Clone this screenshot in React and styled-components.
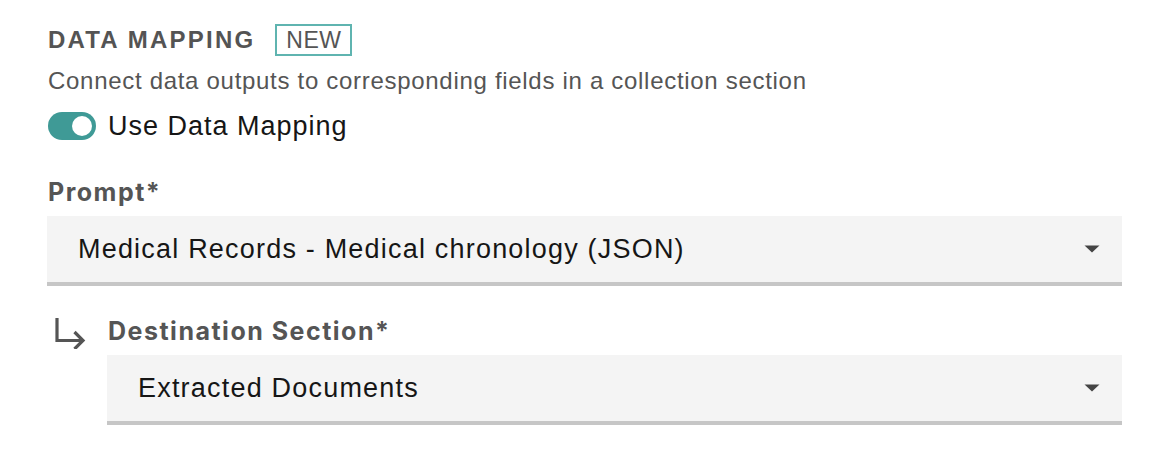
import React from 'react';
import styled, { createGlobalStyle } from 'styled-components';

const GlobalStyle = createGlobalStyle`
  body {
    margin: 0;
    background: #ffffff;
    font-family: "Liberation Sans", Arial, sans-serif;
  }
`;

const Panel = styled.div`
  width: 1166px;
  padding: 24px 44px 0 47px;
  box-sizing: border-box;
`;

const TitleRow = styled.div`
  display: flex;
  align-items: center;
  gap: 20px;
  height: 32px;
`;

const Title = styled.h2`
  margin: 0 0 0 1px;
  font-size: 24px;
  font-weight: 700;
  color: #545454;
  letter-spacing: 2.2px;
`;

const Badge = styled.span`
  display: inline-flex;
  align-items: center;
  box-sizing: border-box;
  height: 32px;
  padding: 0 9px;
  border: 2px solid #5fb4b0;
  font-size: 23px;
  color: #555;
  letter-spacing: 0.5px;
  line-height: 1;
`;

const Description = styled.p`
  margin: 12px 0 0 1px;
  font-size: 24px;
  color: #555;
  line-height: 26px;
  letter-spacing: 0.7px;
`;

const ToggleRow = styled.label`
  display: flex;
  align-items: center;
  gap: 12px;
  height: 28px;
  margin-top: 18px;
  font-size: 27px;
  letter-spacing: 1px;
  color: #161616;
  cursor: pointer;
`;

const Track = styled.span`
  position: relative;
  flex: none;
  display: inline-block;
  width: 48px;
  height: 28px;
  border-radius: 14px;
  background: ${(p) => (p.$on ? '#3f9a96' : '#8d8d8d')};
  margin-left: 1px;

  &::after {
    content: '';
    position: absolute;
    top: 4px;
    left: ${(p) => (p.$on ? '24px' : '4px')};
    width: 20px;
    height: 20px;
    border-radius: 50%;
    background: #fff;
  }
`;

const Field = styled.div`
  display: flex;
  flex-direction: column;
  margin-top: ${(p) => p.$top || 0}px;
`;

const Label = styled.div`
  font-family: Inter, "Liberation Sans", sans-serif;
  font-size: 25px;
  font-weight: 700;
  color: #555;
  letter-spacing: 1.5px;
  margin: 0 0 10px 1px;
  line-height: 28px;
`;

const SelectBox = styled.div`
  display: flex;
  align-items: center;
  justify-content: space-between;
  height: 66px;
  padding: 0 22px 0 31px;
  background: #f4f4f4;
  border-bottom: 4px solid #c6c6c6;
  font-size: 27px;
  letter-spacing: 1.2px;
  color: #161616;
`;

const SubRow = styled.div`
  display: flex;
  align-items: flex-start;
  margin-top: 31px;
`;

const ArrowWrap = styled.div`
  width: 60px;
  flex: none;
  display: flex;
`;

const SubField = styled.div`
  flex: 1;
  display: flex;
  flex-direction: column;
`;

const Caret = () => (
  <svg width="16" height="8" viewBox="0 0 16 8">
    <path d="M0.5 0.5 L15.5 0.5 L8 7.5 Z" fill="#444" />
  </svg>
);

const SubArrow = () => (
  <svg width="36" height="32" viewBox="0 0 36 32" style={{ marginLeft: 5 }}>
    <path d="M5 1 V23.5 H30" fill="none" stroke="#555" strokeWidth="3.2" />
    <path d="M22.5 15 L31 23.5 L22.5 32" fill="none" stroke="#555" strokeWidth="3.2" />
  </svg>
);

const Select = ({ value }) => (
  <SelectBox>
    <span>{value}</span>
    <Caret />
  </SelectBox>
);

export default function App() {
  return (
    <>
      <GlobalStyle />
      <Panel>
        <TitleRow>
          <Title>DATA MAPPING</Title>
          <Badge>NEW</Badge>
        </TitleRow>
        <Description>Connect data outputs to corresponding fields in a collection section</Description>
        <ToggleRow>
          <Track $on />
          Use Data Mapping
        </ToggleRow>
        <Field $top={38}>
          <Label>Prompt*</Label>
          <Select value="Medical Records - Medical chronology (JSON)" />
        </Field>
        <SubRow>
          <ArrowWrap>
            <SubArrow />
          </ArrowWrap>
          <SubField>
            <Label>Destination Section*</Label>
            <Select value="Extracted Documents" />
          </SubField>
        </SubRow>
      </Panel>
    </>
  );
}
